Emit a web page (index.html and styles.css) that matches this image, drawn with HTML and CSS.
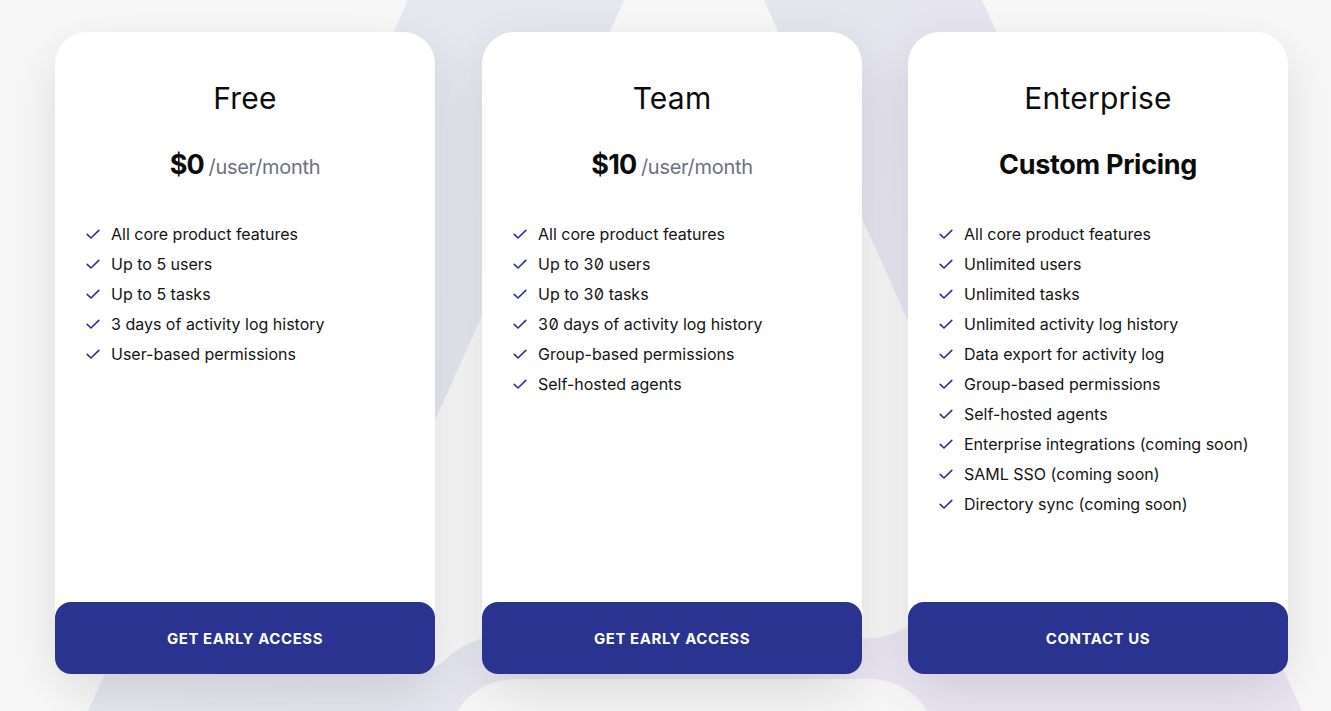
FILE: index.html
```html
<!DOCTYPE html>
<html lang="en">
<head>
<meta charset="utf-8">
<title>Pricing</title>
<link rel="stylesheet" href="styles.css">
</head>
<body>
<div class="page">
  <svg class="backdrop" width="1331" height="711" viewBox="0 0 1331 711" aria-hidden="true">
    <defs>
      <linearGradient id="mark" x1="0" y1="0" x2="1" y2="0.4">
        <stop offset="0" stop-color="#e8e9ef"/>
        <stop offset="0.55" stop-color="#e5e5ee"/>
        <stop offset="1" stop-color="#ebe5f3"/>
      </linearGradient>
    </defs>
    <polygon points="408,0 982,0 1302,711 88,711" fill="url(#mark)"/>
    <path d="M624 0 L764 0 L975 470 C985 530 940 600 905 628 Q885 640 860 638 L520 634 Q470 634 445 660 Q428 676 405 668 Q345 650 355 598 Z" fill="#f7f7f7"/>
    <rect x="450" y="679" width="485" height="120" rx="66" fill="#f6f6f6"/>
  </svg>

  <main class="plans">
    <section class="card">
      <h2 class="plan-name">Free</h2>
      <p class="price"><span class="amount">$0</span> <span class="unit">/user/month</span></p>
      <ul class="features">
        <li><svg class="check" viewBox="0 0 16 16"><path d="M2.2 8.4 L6 12 L13.8 4.4"/></svg><span>All core product features</span></li>
        <li><svg class="check" viewBox="0 0 16 16"><path d="M2.2 8.4 L6 12 L13.8 4.4"/></svg><span>Up to 5 users</span></li>
        <li><svg class="check" viewBox="0 0 16 16"><path d="M2.2 8.4 L6 12 L13.8 4.4"/></svg><span>Up to 5 tasks</span></li>
        <li><svg class="check" viewBox="0 0 16 16"><path d="M2.2 8.4 L6 12 L13.8 4.4"/></svg><span>3 days of activity log history</span></li>
        <li><svg class="check" viewBox="0 0 16 16"><path d="M2.2 8.4 L6 12 L13.8 4.4"/></svg><span>User-based permissions</span></li>
      </ul>
      <a class="cta" href="#">GET EARLY ACCESS</a>
    </section>

    <section class="card">
      <h2 class="plan-name">Team</h2>
      <p class="price"><span class="amount">$10</span> <span class="unit">/user/month</span></p>
      <ul class="features">
        <li><svg class="check" viewBox="0 0 16 16"><path d="M2.2 8.4 L6 12 L13.8 4.4"/></svg><span>All core product features</span></li>
        <li><svg class="check" viewBox="0 0 16 16"><path d="M2.2 8.4 L6 12 L13.8 4.4"/></svg><span>Up to <span class="num">30</span> users</span></li>
        <li><svg class="check" viewBox="0 0 16 16"><path d="M2.2 8.4 L6 12 L13.8 4.4"/></svg><span>Up to <span class="num">30</span> tasks</span></li>
        <li><svg class="check" viewBox="0 0 16 16"><path d="M2.2 8.4 L6 12 L13.8 4.4"/></svg><span><span class="num">30</span> days of activity log history</span></li>
        <li><svg class="check" viewBox="0 0 16 16"><path d="M2.2 8.4 L6 12 L13.8 4.4"/></svg><span>Group-based permissions</span></li>
        <li><svg class="check" viewBox="0 0 16 16"><path d="M2.2 8.4 L6 12 L13.8 4.4"/></svg><span>Self-hosted agents</span></li>
      </ul>
      <a class="cta" href="#">GET EARLY ACCESS</a>
    </section>

    <section class="card">
      <h2 class="plan-name">Enterprise</h2>
      <p class="price"><span class="custom">Custom Pricing</span></p>
      <ul class="features">
        <li><svg class="check" viewBox="0 0 16 16"><path d="M2.2 8.4 L6 12 L13.8 4.4"/></svg><span>All core product features</span></li>
        <li><svg class="check" viewBox="0 0 16 16"><path d="M2.2 8.4 L6 12 L13.8 4.4"/></svg><span>Unlimited users</span></li>
        <li><svg class="check" viewBox="0 0 16 16"><path d="M2.2 8.4 L6 12 L13.8 4.4"/></svg><span>Unlimited tasks</span></li>
        <li><svg class="check" viewBox="0 0 16 16"><path d="M2.2 8.4 L6 12 L13.8 4.4"/></svg><span>Unlimited activity log history</span></li>
        <li><svg class="check" viewBox="0 0 16 16"><path d="M2.2 8.4 L6 12 L13.8 4.4"/></svg><span>Data export for activity log</span></li>
        <li><svg class="check" viewBox="0 0 16 16"><path d="M2.2 8.4 L6 12 L13.8 4.4"/></svg><span>Group-based permissions</span></li>
        <li><svg class="check" viewBox="0 0 16 16"><path d="M2.2 8.4 L6 12 L13.8 4.4"/></svg><span>Self-hosted agents</span></li>
        <li><svg class="check" viewBox="0 0 16 16"><path d="M2.2 8.4 L6 12 L13.8 4.4"/></svg><span>Enterprise integrations (coming soon)</span></li>
        <li><svg class="check" viewBox="0 0 16 16"><path d="M2.2 8.4 L6 12 L13.8 4.4"/></svg><span>SAML SSO (coming soon)</span></li>
        <li><svg class="check" viewBox="0 0 16 16"><path d="M2.2 8.4 L6 12 L13.8 4.4"/></svg><span>Directory sync (coming soon)</span></li>
      </ul>
      <a class="cta" href="#">CONTACT US</a>
    </section>
  </main>
</div>
</body>
</html>
```
FILE: styles.css
```css
* { box-sizing: border-box; }

html, body {
  margin: 0;
  padding: 0;
  background: #f7f7f7;
}

body {
  font-family: Inter, "Noto Sans", "Liberation Sans", sans-serif;
  color: #111;
  -webkit-font-smoothing: antialiased;
}

.page {
  position: relative;
  width: 1331px;
  height: 711px;
  overflow: hidden;
}

.backdrop {
  position: absolute;
  left: 0;
  top: 0;
  z-index: 0;
}

.plans {
  position: relative;
  z-index: 1;
  display: flex;
  gap: 47px;
  padding: 32px 0 0 55px;
}

.card {
  width: 380px;
  height: 642px;
  background: #fff;
  border-radius: 32px;
  display: flex;
  flex-direction: column;
  box-shadow: 0 18px 50px rgba(0, 0, 0, 0.11);
}

.card:last-child {
  margin-left: -1px;
}

.plan-name {
  margin: 48px 0 0;
  font-size: 30px;
  line-height: 36px;
  font-weight: 400;
  text-align: center;
  color: #0c0c0c;
  letter-spacing: 0.2px;
}

.price {
  margin: 31px 0 0;
  height: 36px;
  line-height: 36px;
  text-align: center;
}

.amount {
  font-size: 27px;
  font-weight: 700;
  color: #0b0b0b;
  letter-spacing: -0.8px;
}

.unit {
  font-size: 20px;
  color: #6e7180;
  letter-spacing: -0.3px;
}

.custom {
  font-size: 27px;
  font-weight: 700;
  color: #0b0b0b;
  letter-spacing: -0.3px;
}

.features {
  list-style: none;
  margin: 36px 0 0;
  padding: 0 0 0 30px;
}

.features li {
  display: flex;
  align-items: center;
  height: 30px;
  font-size: 16px;
  color: #141414;
}

.num {
  font-feature-settings: "zero" 1, "tnum" 1;
}

.check {
  width: 16px;
  height: 16px;
  margin-right: 10px;
  flex: none;
  fill: none;
  stroke: #2a338f;
  stroke-width: 1.6;
  stroke-linecap: round;
  stroke-linejoin: round;
}

.cta {
  margin-top: auto;
  height: 72px;
  border-radius: 16px;
  background: #2a338f;
  color: #fff;
  text-decoration: none;
  display: flex;
  align-items: center;
  justify-content: center;
  font-size: 15px;
  font-weight: 700;
  letter-spacing: 0.55px;
}
```
